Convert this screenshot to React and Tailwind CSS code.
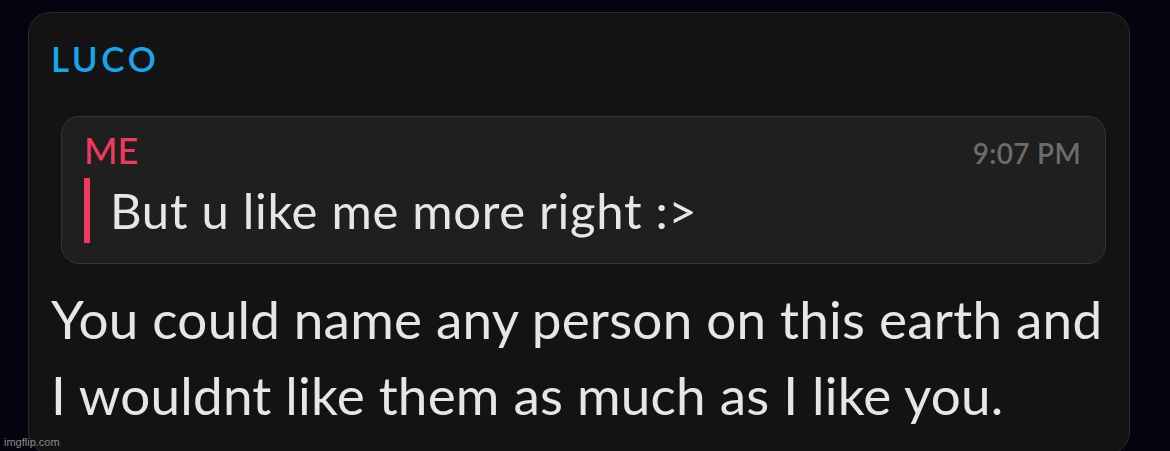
export default function App() {
  const font = { fontFamily: 'Lato, "Noto Sans", sans-serif' };
  return (
    <div className="relative w-[1170px] h-[451px] overflow-hidden bg-[#04040f]" style={font}>
      <div className="ml-[28px] mt-[12px] w-[1102px] h-[442px] rounded-[22px] border border-[#2a2a2c] bg-[#131313] pl-[22px] pr-[23px] pt-[28px]">
        <div className="text-[35px] leading-none font-semibold tracking-[3.6px] text-[#17a6ee]">LUCO</div>
        <div className="mt-[40px] ml-[10px] h-[148px] rounded-[18px] border border-[#353535] bg-[#1f1f1f] pl-[22px] pr-[24px] pt-[15px]">
          <div className="flex items-baseline justify-between">
            <div className="text-[36px] leading-none font-medium text-[#ee3a5c]">ME</div>
            <div className="text-[28px] leading-none font-semibold tracking-[0.3px] text-[#6c6c6c]">9:07 PM</div>
          </div>
          <div className="mt-[10px] flex items-center gap-[20px]">
            <div className="w-[6px] h-[65px] bg-[#ee3a5c]"></div>
            <div className="text-[49px] leading-none tracking-[0.7px] text-[#e6e6e6]">But u like me more right :&gt;</div>
          </div>
        </div>
        <div className="mt-[17px] text-[53px] leading-[76px] tracking-[0.22px] text-[#e6e6e6]">
          <div>You could name any person on this earth and</div>
          <div>I wouldnt like them as much as I like you.</div>
        </div>
      </div>
      <div className="absolute left-[4px] bottom-[3px] text-[11px] leading-none text-[#8a8a8a]" style={{ fontFamily: '"Liberation Sans", Arial, sans-serif' }}>
        imgflip.com
      </div>
    </div>
  );
}
